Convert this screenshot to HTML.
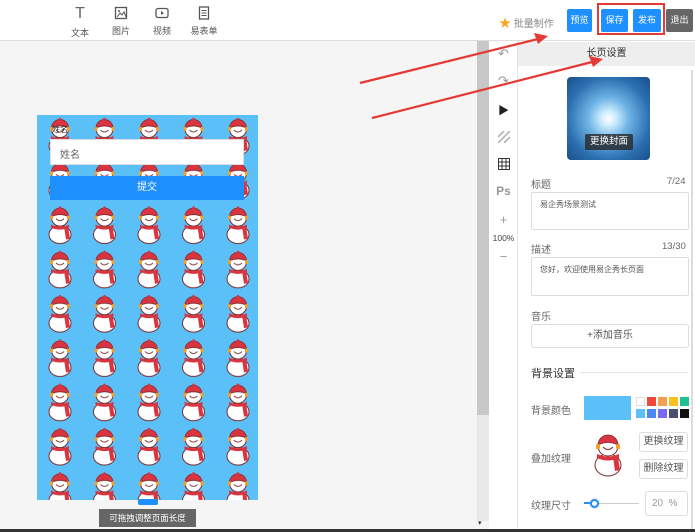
<!DOCTYPE html>
<html><head><meta charset="utf-8"><style>
*{margin:0;padding:0;box-sizing:border-box}
body{width:695px;height:532px;overflow:hidden;background:#f5f5f5;font-family:"Liberation Sans","Noto Sans CJK SC",sans-serif;font-size:11px;color:#555;position:relative}
.abs{position:absolute}
.top{left:0;top:0;width:695px;height:41px;background:#fff;border-bottom:1px solid #ddd}
.tb{position:absolute;top:6px;text-align:center;font-size:9px;color:#555;width:40px}
.btn{position:absolute;top:9px;height:23px;color:#fff;font-size:9px;line-height:23px;text-align:center;border-radius:2px}
.lbl{position:absolute;left:531px;font-size:10px;color:#666}
.ta{position:absolute;left:531px;width:158px;border:1px solid #ddd;border-radius:2px;background:#fff;font-size:8px;color:#555;padding:6px 8px}
.wb{position:absolute;border:1px solid #ddd;background:#fff;border-radius:3px;text-align:center;font-size:10px;color:#555}
.ti{position:absolute;left:489px;width:29px;text-align:center;color:#999}
</style></head><body>
<div class="abs top"></div>
<div class="tb" style="left:60px"><div style="font-size:16px;line-height:16px;color:#666">T</div><div style="margin-top:4px">文本</div></div>
<div class="tb" style="left:101px"><svg width="14" height="14" viewBox="0 0 14 14"><rect x="1.5" y="1.5" width="11" height="11" fill="none" stroke="#555" stroke-width="1.3"/><path d="M3 11l3-4 2 2 2-3 2 5" fill="none" stroke="#555"/><circle cx="5" cy="5" r="1" fill="#555"/></svg><div style="margin-top:2px">图片</div></div>
<div class="tb" style="left:142px"><svg width="14" height="14" viewBox="0 0 14 14"><rect x="1" y="2.5" width="12" height="9" rx="2" fill="none" stroke="#555" stroke-width="1.3"/><path d="M6 5v4l3-2z" fill="#555"/></svg><div style="margin-top:2px">视频</div></div>
<div class="tb" style="left:184px"><svg width="14" height="14" viewBox="0 0 14 14"><rect x="2.5" y="1" width="9" height="12" fill="none" stroke="#555" stroke-width="1.3"/><path d="M4.5 4.5h5M4.5 7h5M4.5 9.5h5" stroke="#555"/></svg><div style="margin-top:2px">易表单</div></div>

<div class="abs" style="left:499px;top:14px;font-size:10px;color:#888"><span style="color:#f5a623;font-size:12px">★</span> 批量制作</div>
<div class="btn" style="left:567px;width:25px;background:#1e90ff">预览</div>
<div class="btn" style="left:601px;width:27px;background:#1e90ff">保存</div>
<div class="btn" style="left:633px;width:28px;background:#1e90ff">发布</div>
<div class="btn" style="left:666px;width:27px;background:#666">退出</div>
<div class="abs" style="left:597px;top:3px;width:68px;height:32px;border:2px solid #e53935"></div>

<svg class="abs" style="left:37px;top:115px" width="221" height="385">
<defs><pattern id="sm" x="0" y="0" width="44.5" height="44.3" patternUnits="userSpaceOnUse">
<ellipse cx="23" cy="31" rx="11" ry="9" fill="#fff" stroke="#7a2a2a" stroke-width="1"/>
<circle cx="23" cy="14" r="8.5" fill="#fff" stroke="#7a2a2a" stroke-width="1"/>
<path d="M14.5 13a8.5 8.5 0 0 1 17 0q-8.5-4-17 0z" fill="#d9343f" stroke="#7a2a2a" stroke-width="0.8"/>
<circle cx="23" cy="4" r="1.3" fill="#d9343f"/>
<rect x="13" y="12" width="3" height="4" rx="1" fill="#f0a030"/><rect x="30" y="12" width="3" height="4" rx="1" fill="#f0a030"/>
<path d="M19 15q4 4 8 0" fill="none" stroke="#7a2a2a" stroke-width="0.9"/>
<path d="M14 21q9 4 18 0l0 3q-9 4-18 0z" fill="#d9343f"/>
<path d="M27 23l4 0 2 12-4 1z" fill="#d9343f"/>
</pattern></defs>
<rect width="221" height="385" fill="#5bc0f8"/>
<rect width="221" height="385" fill="url(#sm)"/>
</svg>
<div class="abs" style="left:52px;top:124px;font-size:8px;color:#333">姓名</div>
<div class="abs" style="left:50px;top:139px;width:194px;height:26px;background:#fff;border:1px solid #ddd;font-size:10px;color:#666;padding:6px 9px">姓名</div>
<div class="abs" style="left:50px;top:176px;width:194px;height:24px;background:#1e8fff;color:#fff;font-size:10px;text-align:center;line-height:24px">提交</div>
<div class="abs" style="left:138px;top:499px;width:20px;height:6px;background:#1e8fff;border-radius:2px"></div>
<div class="abs" style="left:99px;top:509px;width:97px;height:18px;background:#666;color:#fff;font-size:8.5px;text-align:center;line-height:18px">可拖拽调整页面长度</div>

<div class="abs" style="left:477px;top:41px;width:12px;height:480px;background:#e8e8e8"></div>
<div class="abs" style="left:477px;top:41px;width:12px;height:374px;background:#c8c8c8"></div>
<div class="abs" style="left:478px;top:519px;font-size:7px;color:#333">▾</div>
<div class="abs" style="left:489px;top:41px;width:29px;height:488px;background:#fff;border-right:1px solid #e5e5e5"></div>
<div class="ti" style="top:46px;font-size:13px">↶</div>
<div class="ti" style="top:73px;font-size:13px">↷</div>
<div class="ti" style="top:102px;font-size:11px;color:#222">▶</div>
<svg class="abs" style="left:498px;top:131px" width="12" height="12"><path d="M0 6L6 0M0 12L12 0M6 12L12 6" stroke="#aaa" stroke-width="1.5"/></svg>
<svg class="abs" style="left:498px;top:158px" width="12" height="12"><rect x="0.5" y="0.5" width="11" height="11" fill="none" stroke="#333"/><path d="M4 0v12M8 0v12M0 4h12M0 8h12" stroke="#333"/></svg>
<div class="ti" style="top:184px;font-size:12px;font-weight:bold">Ps</div>
<div class="ti" style="top:212px;font-size:13px">+</div>
<div class="ti" style="top:233px;font-size:8.5px;color:#444">100%</div>
<div class="ti" style="top:249px;font-size:13px">−</div>

<div class="abs" style="left:518px;top:41px;width:177px;height:488px;background:#fff"></div>
<div class="abs" style="left:518px;top:42px;width:177px;height:24px;background:#eee;text-align:center;line-height:24px;font-size:10px;color:#333">长页设置</div>
<div class="abs" style="left:691px;top:70px;width:2px;height:460px;background:#ddd"></div>
<div class="abs" style="left:567px;top:77px;width:83px;height:83px;border-radius:4px;background:radial-gradient(circle at 50% 50%,#fff 0,#cfeeff 12%,#6fb4e6 35%,#2b6fb0 70%,#1a4f8a 100%)"></div>
<div class="abs" style="left:585px;top:134px;width:48px;height:16px;background:rgba(40,40,40,.8);color:#fff;font-size:9.5px;text-align:center;line-height:16px;border-radius:2px">更换封面</div>

<div class="lbl" style="top:176px">标题</div><div class="abs" style="left:667px;top:176px;font-size:9.5px;color:#666">7/24</div>
<div class="ta" style="top:192px;height:38px">易企秀场景测试</div>
<div class="lbl" style="top:241px">描述</div><div class="abs" style="left:662px;top:241px;font-size:9.5px;color:#666">13/30</div>
<div class="ta" style="top:257px;height:39px">您好，欢迎使用易企秀长页面</div>
<div class="lbl" style="top:308px">音乐</div>
<div class="wb" style="left:531px;top:324px;width:158px;height:24px;line-height:22px">+添加音乐</div>
<div class="abs" style="left:531px;top:365px;font-size:11px;color:#333">背景设置</div>
<div class="abs" style="left:580px;top:372px;width:108px;height:1px;background:#e5e5e5"></div>
<div class="lbl" style="top:402px">背景颜色</div>
<div class="abs" style="left:584px;top:396px;width:47px;height:24px;background:#5bc0f8"></div>
<svg class="abs" style="left:636px;top:397px" width="53" height="22">
<rect x="0.5" y="0.5" width="8" height="8" fill="#fff" stroke="#ddd"/><rect x="11" y="0" width="9" height="9" fill="#f0463c"/><rect x="22" y="0" width="9" height="9" fill="#f0a050"/><rect x="33" y="0" width="9" height="9" fill="#f8c020"/><rect x="44" y="0" width="9" height="9" fill="#20c090"/>
<rect x="0" y="12" width="9" height="9" fill="#5bc0f8"/><rect x="11" y="12" width="9" height="9" fill="#4a8af0"/><rect x="22" y="12" width="9" height="9" fill="#7a6af0"/><rect x="33" y="12" width="9" height="9" fill="#4a5070"/><rect x="44" y="12" width="9" height="9" fill="#111"/>
</svg>
<div class="lbl" style="top:450px">叠加纹理</div>
<svg class="abs" style="left:590px;top:432px" width="36" height="46" viewBox="5 1 36 46">
<ellipse cx="23" cy="34" rx="13" ry="11" fill="#fff" stroke="#7a2a2a" stroke-width="1"/>
<circle cx="23" cy="15" r="10" fill="#fff" stroke="#7a2a2a" stroke-width="1"/>
<path d="M13 14a10 10 0 0 1 20 0q-10-5-20 0z" fill="#d9343f" stroke="#7a2a2a" stroke-width="0.8"/>
<rect x="11" y="13" width="4" height="5" rx="1" fill="#f0a030"/><rect x="31" y="13" width="4" height="5" rx="1" fill="#f0a030"/>
<path d="M18 16q5 5 10 0" fill="none" stroke="#7a2a2a"/>
<path d="M12 23q11 5 22 0l0 4q-11 5-22 0z" fill="#d9343f"/><path d="M28 26l5 0 2 13-5 1z" fill="#d9343f"/>
</svg>
<div class="wb" style="left:639px;top:432px;width:49px;height:20px;line-height:18px">更换纹理</div>
<div class="wb" style="left:639px;top:459px;width:49px;height:20px;line-height:18px">删除纹理</div>
<div class="lbl" style="top:497px">纹理尺寸</div>
<div class="abs" style="left:586px;top:503px;width:53px;height:1px;background:#ccc"></div>
<div class="abs" style="left:584px;top:502px;width:10px;height:2px;background:#1e8fff"></div>
<div class="abs" style="left:590px;top:499px;width:9px;height:9px;border-radius:50%;background:#fff;border:2px solid #1e8fff;box-shadow:0 0 2px #aaa"></div>
<div class="wb" style="left:645px;top:491px;width:43px;height:25px;line-height:23px;text-align:left;padding-left:6px;color:#999">20 &nbsp;%</div>
<div class="abs" style="left:0;top:529px;width:695px;height:3px;background:#333"></div>

<svg class="abs" style="left:0;top:0" width="695" height="532">
<path d="M360 83L538 39" stroke="#e53935" stroke-width="2.2"/><path d="M548 36l-14 -3 4 11z" fill="#e53935"/>
<path d="M372 118L592 62" stroke="#e53935" stroke-width="2.2"/><path d="M603 59l-14 -3 4 11z" fill="#e53935"/>
</svg>
</body></html>
